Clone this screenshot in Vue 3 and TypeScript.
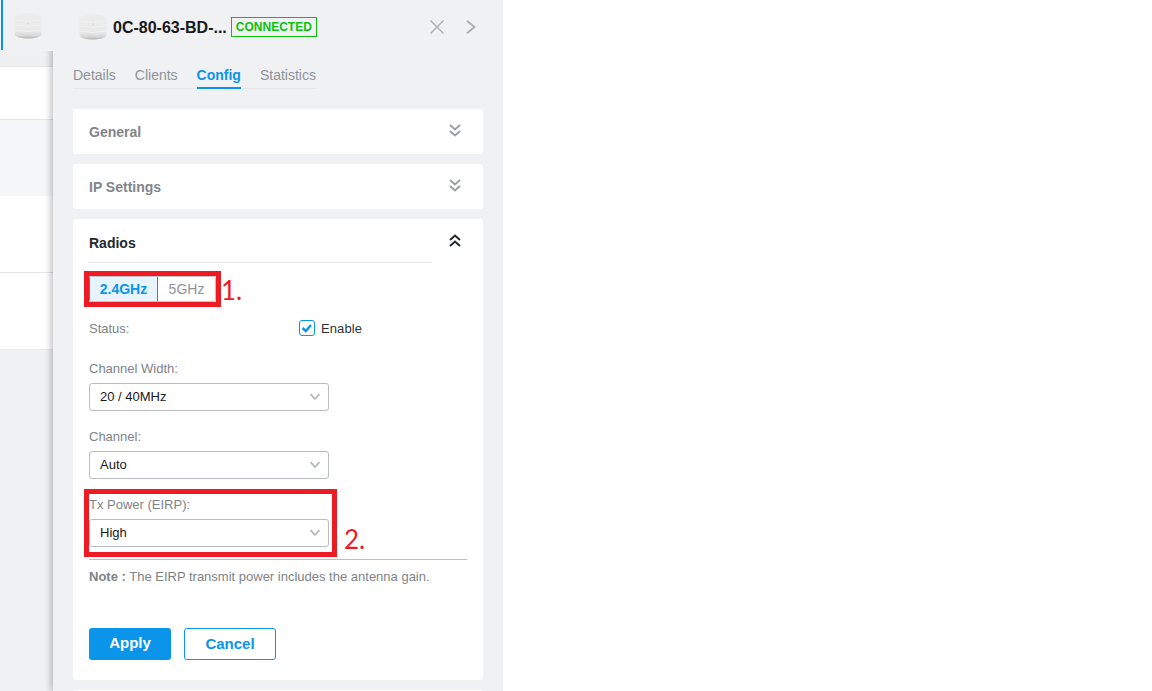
<script setup lang="ts">
const tabs: string[] = ['Details', 'Clients', 'Config', 'Statistics']
const selects = [
  { label: 'Channel Width:', value: '20 / 40MHz' },
  { label: 'Channel:', value: 'Auto' },
  { label: 'Tx Power (EIRP):', value: 'High' },
]
</script>

<template>
  <div class="page">
    <svg width="0" height="0" class="defs">
      <defs>
        <linearGradient id="apg" x1="0" y1="0" x2="0" y2="1">
          <stop offset="0" stop-color="#ececec" />
          <stop offset="0.7" stop-color="#e9e9e9" />
          <stop offset="0.88" stop-color="#d9d9d9" />
          <stop offset="1" stop-color="#b4b4b4" />
        </linearGradient>
      </defs>
    </svg>
    <aside class="rail">
      <div class="rail-top">
        <span class="rail-bar"></span>
        <svg class="ap" viewBox="0 0 28 26" width="28" height="26">
          <path d="M0.5 5 Q1 2 6 1 Q14 -0.5 22 1 Q27 2 27.5 5 L27.5 21 Q27 24 20 25 Q14 26 8 25 Q1 24 0.5 21 Z" fill="url(#apg)" />
          <path d="M1 7 Q14 10 27 7 M1 12 Q14 15 27 12 M1 17 Q14 20 27 17" stroke="#f2f2f2" stroke-width="1" fill="none" />
          <circle cx="14" cy="10" r="0.6" fill="#b8b8b8" />
        </svg>
      </div>
      <div class="r r-gap"></div>
      <div class="r r-a"></div>
      <div class="r r-b"></div>
      <div class="r r-c"></div>
      <div class="r r-d"></div>
    </aside>
    <section class="panel">
      <header class="head">
        <svg class="ap" viewBox="0 0 28 26" width="28" height="26">
          <path d="M0.5 5 Q1 2 6 1 Q14 -0.5 22 1 Q27 2 27.5 5 L27.5 21 Q27 24 20 25 Q14 26 8 25 Q1 24 0.5 21 Z" fill="url(#apg)" />
          <path d="M1 7 Q14 10 27 7 M1 12 Q14 15 27 12 M1 17 Q14 20 27 17" stroke="#f2f2f2" stroke-width="1" fill="none" />
          <circle cx="14" cy="10" r="0.6" fill="#b8b8b8" />
        </svg>
        <h1 class="title">0C-80-63-BD-...</h1>
        <span class="tag">CONNECTED</span>
        <svg class="x" viewBox="0 0 14 14" width="14" height="14"><path d="M0.5 0.5 13.5 13.5 M13.5 0.5 0.5 13.5" stroke="#a9aeb3" stroke-width="1.4" fill="none" /></svg>
        <svg class="next" viewBox="0 0 10 14" width="10" height="14"><path d="M1 0.8 8.5 7 1 13.2" stroke="#a9aeb3" stroke-width="1.8" fill="none" /></svg>
      </header>
      <nav class="tabs">
        <span v-for="t in tabs" :key="t" class="tab" :class="{ on: t === 'Config' }">{{ t }}</span>
      </nav>
      <div class="card slim">
        <span class="ctitle dim">General</span>
        <svg class="dbl" viewBox="0 0 12 13" width="12" height="13"><path d="M1 1 6 5.5 11 1 M1 7 6 11.5 11 7" stroke="#9aa0a6" stroke-width="2" fill="none" /></svg>
      </div>
      <div class="card slim">
        <span class="ctitle dim">IP Settings</span>
        <svg class="dbl" viewBox="0 0 12 13" width="12" height="13"><path d="M1 1 6 5.5 11 1 M1 7 6 11.5 11 7" stroke="#9aa0a6" stroke-width="2" fill="none" /></svg>
      </div>
      <div class="card radios">
        <div class="rhead">
          <span class="ctitle">Radios</span>
          <svg class="dbl up" viewBox="0 0 12 13" width="12" height="13"><path d="M1 6 6 1.5 11 6 M1 12 6 7.5 11 12" stroke="#23282d" stroke-width="2" fill="none" /></svg>
        </div>
        <div class="seg-row">
          <div class="seg">
            <span class="s s-on">2.4GHz</span>
            <span class="s">5GHz</span>
          </div>
          <span class="mark m1"></span>
          <span class="num n1">1.</span>
        </div>
        <div class="status">
          <span class="lab st">Status:</span>
          <span class="cb"><svg viewBox="0 0 16 16" width="16" height="16"><path d="M3.5 8 6.8 11 12 5" stroke="#0a94ea" stroke-width="2.4" fill="none" /></svg></span>
          <span class="en">Enable</span>
        </div>
        <div v-for="(s, i) in selects" :key="s.label" class="field" :class="{ last: i === 2 }">
          <div class="lab">{{ s.label }}</div>
          <div class="sel">
            <span>{{ s.value }}</span>
            <svg viewBox="0 0 12 8" width="12" height="8"><path d="M1.5 1.2 6 6 10.5 1.2" stroke="#b4b8bc" stroke-width="1.8" fill="none" /></svg>
          </div>
          <template v-if="i === 2">
            <span class="mark m2"></span>
            <span class="num n2">2.</span>
          </template>
        </div>
        <div class="note"><b>Note :</b> The EIRP transmit power includes the antenna gain.</div>
        <div class="btns">
          <button class="btn apply">Apply</button>
          <button class="btn cancel">Cancel</button>
        </div>
      </div>
      <div class="card tail"></div>
    </section>
  </div>
</template>

<style>
html, body { background: #fff; margin: 0; overflow: hidden; }
</style>

<style scoped>
.page { width: 503px; height: 691px; display: flex; overflow: hidden; background: #f0f1f3; font-family: "Liberation Sans", Arial, sans-serif; position: relative; }
.defs { position: absolute; }
.rail { width: 53px; flex: none; display: flex; flex-direction: column; }
.rail-top { height: 51px; display: flex; padding: 13px 0 0 14px; box-sizing: border-box; position: relative; z-index: 2; background: #f0f1f3; }
.rail-bar { position: absolute; left: 1px; top: 0; width: 2px; height: 50px; background: #0a94ea; }
.ap { flex: none; }
.r { box-sizing: border-box; }
.r-gap { height: 16px; background: #eff0f2; border-bottom: 1px solid #e3e4e6; }
.r-a { height: 53px; background: #fff; border-bottom: 1px solid #e3e4e6; }
.r-b { height: 76px; background: #f6f7f9; }
.r-c { height: 77px; background: #fff; border-bottom: 1px solid #e3e4e6; }
.r-d { height: 77px; background: #fff; border-bottom: 1px solid #e8e9eb; }
.panel { flex: 1; min-width: 0; background: #f0f1f3; padding: 0 20px; box-sizing: border-box; box-shadow: -1px 0 8px rgba(0, 0, 0, 0.32); position: relative; z-index: 1; }
.head { height: 51px; display: flex; align-items: center; padding-top: 3px; box-sizing: border-box; margin-left: 6px; }
.title { font-size: 16px; font-weight: 700; color: #17191c; margin: 0 0 0 6px; white-space: nowrap; position: relative; top: 1px; }
.tag { margin-left: 4px; height: 20px; width: 86px; box-sizing: border-box; border: 1px solid #0cc00c; color: #0cc00c; font-size: 12px; font-weight: 700; line-height: 18px; text-align: center; }
.x { margin-left: 113px; }
.next { margin-left: 22px; }
.tabs { display: flex; gap: 19px; width: 243px; height: 38px; padding-top: 15px; box-sizing: border-box; border-bottom: 1px solid #e4e6e8; }
.tab { font-size: 14px; color: #8e9399; height: 23px; line-height: 18px; white-space: nowrap; box-sizing: border-box; }
.tab.on { color: #0a94ea; font-weight: 700; border-bottom: 2px solid #0a94ea; }
.card { background: #fff; border-radius: 3px; margin-top: 10px; padding: 0 16px; box-sizing: border-box; }
.slim { height: 45px; display: flex; align-items: center; justify-content: space-between; padding-right: 22px; }
.tabs + .card { margin-top: 20px; }
.ctitle { font-size: 14px; font-weight: 700; color: #23282d; }
.ctitle.dim { color: #80858b; }
.dbl { margin-top: -3px; }
.radios { height: 461px; display: flex; flex-direction: column; }
.rhead { height: 44px; width: 343px; box-sizing: border-box; display: flex; align-items: center; justify-content: space-between; border-bottom: 1px solid #e8e9eb; position: relative; padding-top: 4px; }
.rhead .dbl { position: absolute; left: 360px; top: 15px; margin: 0; }
.seg-row { position: relative; margin-top: 13px; height: 26px; }
.seg { display: inline-flex; height: 26px; box-sizing: border-box; width: 127px; border: 1px solid #c0c4c8; border-left-color: #0a94ea; border-radius: 3px; font-size: 14px; overflow: hidden; }
.s { display: flex; align-items: center; justify-content: center; flex: 1; color: #8e9399; }
.s-on { flex: none; width: 68px; background: #e8f4fd; color: #0a94ea; font-weight: 700; border-right: 1px solid #0a94ea; box-sizing: border-box; }
.mark { position: absolute; border: 5px solid #ed1c24; box-sizing: border-box; pointer-events: none; }
.m1 { left: -5px; top: -5px; width: 137px; height: 36px; }
.num { position: absolute; color: #ed1c24; font-family: Lato, sans-serif; font-size: 26px; line-height: 28px; }
.n1 { left: 132px; top: 0; }
.status { margin-top: 18px; height: 16px; display: flex; align-items: center; }
.lab { font-size: 13px; color: #7e8388; line-height: 18px; }
.st { width: 210px; margin-top: 2px; }
.cb { width: 16px; height: 16px; box-sizing: border-box; border: 1px solid #0a94ea; border-radius: 3px; display: flex; align-items: center; justify-content: center; }
.cb svg { flex: none; }
.en { margin-left: 6px; font-size: 13px; color: #2e3338; letter-spacing: 0.1px; }
.field { position: relative; margin-top: 24px; width: 240px; }
.field + .field { margin-top: 17px; }
.sel { margin-top: 5px; height: 28px; box-sizing: border-box; border: 1px solid #b9bdc1; border-radius: 3px; display: flex; align-items: center; justify-content: space-between; padding: 0 7px 0 10px; font-size: 13px; color: #17191c; }
.sel span { margin-top: -2px; }
.m2 { left: -5px; top: -7px; width: 253px; height: 68px; }
.n2 { left: 255px; top: 29px; }
.note { margin-top: 12px; width: 378px; box-sizing: border-box; border-top: 1px solid #bdbfc2; padding-top: 9px; font-size: 13px; color: #7e8388; line-height: 16px; white-space: nowrap; }
.btns { display: flex; gap: 13px; margin-top: 43px; }
.btn { height: 32px; box-sizing: border-box; border-radius: 3px; font: 700 15px "Liberation Sans", Arial, sans-serif; padding: 0 0 2px; }
.apply { width: 82px; background: #0a94ea; border: none; color: #fff; padding-bottom: 4px; }
.cancel { width: 92px; background: #fff; border: 1px solid #0a94ea; color: #0a94ea; }
.tail { height: 20px; }
</style>
